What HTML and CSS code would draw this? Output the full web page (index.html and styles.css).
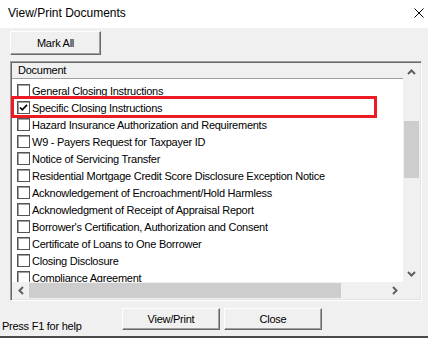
FILE: index.html
```html
<!DOCTYPE html>
<html lang="en">
<head>
  <meta charset="UTF-8">
  <meta name="viewport" content="width=device-width, initial-scale=1.0">
  <title>View/Print Documents</title>
  <link rel="stylesheet" href="styles.css">
</head>
<body>
  <div class="window">
    <div class="titlebar">
      <span class="title">View/Print Documents</span>
      <svg class="close-x" width="10" height="10" viewBox="0 0 10 10">
        <path d="M0.5 0.5 L9.5 9.5 M9.5 0.5 L0.5 9.5" stroke="#000" stroke-width="1" fill="none"/>
      </svg>
    </div>

    <div class="toolbar">
      <button class="btn btn-mark">Mark All</button>
    </div>

    <div class="listbox">
      <div class="list-view">
        <div class="list-header">Document</div>
        <ul class="list-rows">
          <li class="row"><span class="check"></span>General Closing Instructions</li>
          <li class="row"><span class="check checked">
            <svg width="9" height="9" viewBox="0 0 9 9"><path d="M1 4.5 L3.3 6.8 L8 1.8" stroke="#000" stroke-width="1.7" fill="none"/></svg>
          </span>Specific Closing Instructions</li>
          <li class="row"><span class="check"></span>Hazard Insurance Authorization and Requirements</li>
          <li class="row"><span class="check"></span>W9 - Payers Request for Taxpayer ID</li>
          <li class="row"><span class="check"></span>Notice of Servicing Transfer</li>
          <li class="row"><span class="check"></span>Residential Mortgage Credit Score Disclosure Exception Notice</li>
          <li class="row"><span class="check"></span>Acknowledgement of Encroachment/Hold Harmless</li>
          <li class="row"><span class="check"></span>Acknowledgment of Receipt of Appraisal Report</li>
          <li class="row"><span class="check"></span>Borrower's Certification, Authorization and Consent</li>
          <li class="row"><span class="check"></span>Certificate of Loans to One Borrower</li>
          <li class="row"><span class="check"></span>Closing Disclosure</li>
          <li class="row"><span class="check"></span>Compliance Agreement</li>
        </ul>
      </div>

      <div class="vscroll">
        <span class="arrow">
          <svg width="9" height="6" viewBox="0 0 9 6"><path d="M1 5 L4.5 1.5 L8 5" stroke="#606060" stroke-width="2" fill="none"/></svg>
        </span>
        <div class="track"><div class="vthumb"></div></div>
        <span class="arrow">
          <svg width="9" height="6" viewBox="0 0 9 6"><path d="M1 1 L4.5 4.5 L8 1" stroke="#606060" stroke-width="2" fill="none"/></svg>
        </span>
      </div>

      <div class="hscroll">
        <span class="arrow">
          <svg width="6" height="9" viewBox="0 0 6 9"><path d="M5 1 L1.5 4.5 L5 8" stroke="#606060" stroke-width="2" fill="none"/></svg>
        </span>
        <div class="track"><div class="hthumb"></div></div>
        <span class="arrow">
          <svg width="6" height="9" viewBox="0 0 6 9"><path d="M1 1 L4.5 4.5 L1 8" stroke="#606060" stroke-width="2" fill="none"/></svg>
        </span>
      </div>

      <div class="corner"></div>
    </div>

    <div class="footer">
      <span class="status">Press F1 for help</span>
      <div class="actions">
        <button class="btn btn-action">View/Print</button>
        <button class="btn btn-action">Close</button>
      </div>
    </div>

    <!-- red annotation box -->
    <div class="highlight"></div>
  </div>
</body>
</html>
```

FILE: styles.css
```css
/* General Styles */
* {
  box-sizing: border-box;
}

body {
  margin: 0;
  padding: 0;
  background-color: #f0f0f0;
  font-family: "Liberation Sans", Arial, sans-serif;
  font-size: 11px;
  letter-spacing: -0.25px;
  color: #000;
}

.window {
  position: relative;
  width: 428px;
  height: 338px;
  overflow: hidden;
}

/* Title bar */
.titlebar {
  height: 28px;
  background-color: #fff;
  display: flex;
  align-items: center;
  justify-content: space-between;
  padding: 0 4px 2px 8px;
}

.title {
  font-size: 12px;
  letter-spacing: 0;
}

/* Buttons */
.btn {
  font-family: inherit;
  font-size: 11px;
  letter-spacing: -0.25px;
  color: #000;
  background-color: #f0f0f0;
  border: 1px solid;
  border-color: #fff #696969 #696969 #fff;
  box-shadow: inset -1px -1px #a0a0a0;
  padding: 0;
  margin: 0;
}

.toolbar {
  padding: 3px 0 6px 10px;
}

.btn-mark {
  width: 91px;
  height: 24px;
}

/* List box */
.listbox {
  margin-left: 10px;
  width: 412px;
  height: 240px;
  background-color: #fff;
  border: 1px solid;
  border-color: #a0a0a0 #fff #fff #a0a0a0;
  box-shadow: inset 1px 1px #696969, inset -1px -1px #e3e3e3;
  padding: 1px;
  display: grid;
  grid-template-columns: 1fr 17px;
  grid-template-rows: 1fr 17px;
}

.list-view {
  overflow: hidden;
}

.list-header {
  height: 16px;
  line-height: 15px;
  padding-left: 6px;
  background-color: #f0f0f0;
  border-bottom: 1px solid #a0a0a0;
}

.list-rows {
  list-style: none;
  margin: 0;
  padding: 3px 0 0 0;
}

.row {
  height: 17px;
  display: flex;
  align-items: center;
  white-space: nowrap;
  padding-left: 5px;
}

.check {
  width: 13px;
  height: 13px;
  margin-right: 2px;
  border: 1px solid #555;
  box-shadow: inset 1px 1px #a0a0a0;
  background-color: #fff;
  display: flex;
  align-items: center;
  justify-content: center;
  flex-shrink: 0;
}

/* Scrollbars */
.vscroll,
.hscroll,
.corner {
  background-color: #f0f0f0;
}

.vscroll {
  display: flex;
  flex-direction: column;
}

.hscroll {
  display: flex;
}

.arrow {
  width: 17px;
  height: 17px;
  display: flex;
  align-items: center;
  justify-content: center;
  flex-shrink: 0;
}

.track {
  flex: 1;
}

.vthumb {
  margin: 41px 1px 0 1px;
  height: 57px;
  background-color: #cdcdcd;
}

.hthumb {
  margin: 1px 0;
  width: 312px;
  height: 15px;
  background-color: #cdcdcd;
}

/* Footer */
.footer {
  height: 37px;
  display: flex;
  padding-top: 7px;
  border-bottom: 2px solid #4a4a4a;
}

.status {
  width: 122px;
  padding-left: 2px;
  align-self: flex-end;
  padding-bottom: 3px;
  line-height: 13px;
}

.actions {
  display: flex;
  gap: 4px;
}

.btn-action {
  width: 98px;
  height: 22px;
}

/* Annotation */
.highlight {
  position: absolute;
  left: 11px;
  top: 96px;
  width: 366px;
  height: 22px;
  border: 3px solid #ed1c24;
}
```
